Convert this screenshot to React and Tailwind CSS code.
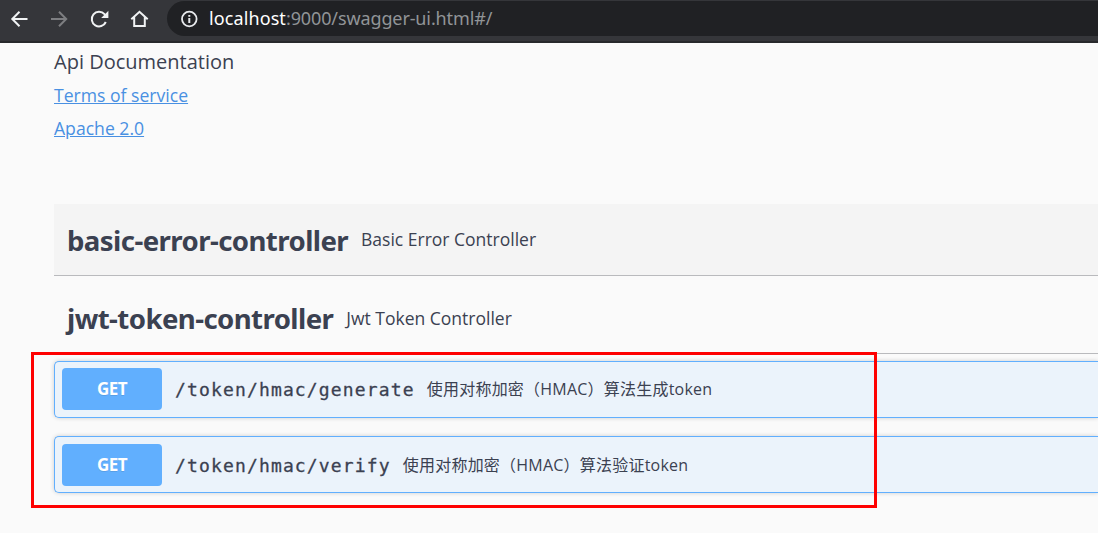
function Toolbar() {
  return (
    <header className="h-[43px] shrink-0 bg-[#35363a] border-b-2 border-[#28292c] flex items-start pt-px">
      <nav className="flex w-[167px] h-[35px] shrink-0 items-center pl-[7px] gap-4 text-[#f1f3f4]">
        <svg className="w-6 h-6 shrink-0" viewBox="0 0 24 24" fill="none" stroke="currentColor" strokeWidth="2">
          <path d="M20.5 12H5.5M12.5 4.8L5.3 12l7.2 7.2" />
        </svg>
        <svg className="w-6 h-6 shrink-0 text-[#7d7e81]" viewBox="0 0 24 24" fill="none" stroke="currentColor" strokeWidth="2">
          <path d="M4 12h15M12 4.8l7.2 7.2-7.2 7.2" />
        </svg>
        <svg className="w-6 h-6 shrink-0" viewBox="0 0 24 24" fill="none" stroke="currentColor" strokeWidth="2">
          <path d="M18.8 15A7.3 7.3 0 1 1 17.5 7.2L18.5 8.2" />
          <path d="M21.4 3.8v7.2h-7.2z" fill="currentColor" stroke="none" />
        </svg>
        <svg className="w-6 h-6 shrink-0" viewBox="0 0 24 24" fill="none" stroke="currentColor" strokeWidth="2">
          <path d="M4.3 12.2L12.5 4.8l8.2 7.4M7.2 10v9h10.6v-9" />
        </svg>
      </nav>
      <div className="h-[35px] flex-1 bg-[#202124] rounded-l-full flex items-center pl-3">
        <svg className="w-5 h-5 shrink-0 text-[#e8eaed]" viewBox="0 0 20 20" fill="none" stroke="currentColor" strokeWidth="1.8">
          <circle cx="10.3" cy="10" r="7.3" />
          <path d="M10.3 9v5M10.3 6v1.8" strokeWidth="2" />
        </svg>
        <span className="ml-[10px] text-[18px] leading-[35px] tracking-[-0.12px] font-['Noto_Sans',sans-serif] text-[#919497] whitespace-nowrap">
          <span className="text-white tracking-[0.1px]">localhost</span>:9000/swagger-ui.html#/
        </span>
      </div>
    </header>
  );
}

function Operation({ path, summary }) {
  return (
    <div className="flex h-[56.8px] items-center rounded-l-[5px] border border-r-0 border-[#61affe] bg-[#ebf3fb] pl-[7px] shadow-[0_0_4px_rgba(0,0,0,0.19)]">
      <span className="h-[42px] w-[100px] shrink-0 rounded-[4px] bg-[#61affe] text-center text-[17px] leading-[42px] font-bold text-white tracking-[-0.5px] font-['Noto_Sans',sans-serif] [text-shadow:0_1px_0_rgba(0,0,0,0.1)]">
        GET
      </span>
      <span className="ml-[13px] pt-px text-[18px] tracking-[1.15px] font-['DejaVu_Sans_Mono',monospace] text-[#3b4151] whitespace-nowrap [-webkit-text-stroke:0.3px_#3b4151]">
        {path}
      </span>
      <span className="ml-3 text-[16px] leading-6 tracking-[0.22px] font-['Open_Sans','Noto_Sans_CJK_SC',sans-serif] text-[#3b4151] whitespace-nowrap">
        {summary}
      </span>
    </div>
  );
}

function TagTitle({ name, description }) {
  return (
    <>
      <h2 className="text-[27.6px] leading-9 font-bold tracking-[-0.58px] font-['Noto_Sans',sans-serif] text-[#3b4151] whitespace-nowrap">{name}</h2>
      <p className="ml-[13px] mb-px text-[17.5px] leading-6 font-['Open_Sans',sans-serif] text-[#3b4151] whitespace-nowrap">{description}</p>
    </>
  );
}

export default function App() {
  return (
    <div className="relative flex h-[533px] w-[1098px] flex-col overflow-hidden bg-[#fafafa]">
      <Toolbar />
      <main className="pl-[54px] font-['Open_Sans',sans-serif] text-[#3b4151]">
        <div className="flex h-[161px] flex-col items-start pt-[4px]">
          <p className="text-[20px] leading-[30px]">Api Documentation</p>
          <a className="mt-[5px] text-[17.6px] leading-[26px] text-[#4990e2] underline">Terms of service</a>
          <a className="mt-[7px] text-[17.6px] leading-[26px] text-[#4990e2] underline">Apache 2.0</a>
        </div>
        <section className="flex h-[72px] items-center border-b border-[#b9babd] bg-[#f4f4f4] pl-[13px]">
          <TagTitle name="basic-error-controller" description="Basic Error Controller" />
        </section>
        <section className="mt-[7px] flex h-[71px] items-center border-b border-[#b9babd] pl-[13px]">
          <TagTitle name="jwt-token-controller" description="Jwt Token Controller" />
        </section>
        <div className="mt-[6.9px] flex flex-col gap-[18.7px]">
          <Operation path="/token/hmac/generate" summary="使用对称加密（HMAC）算法生成token" />
          <Operation path="/token/hmac/verify" summary="使用对称加密（HMAC）算法验证token" />
        </div>
      </main>
      <div className="absolute left-[31px] top-[352px] h-[156px] w-[846px] border-3 border-[#fe0000]" />
    </div>
  );
}
